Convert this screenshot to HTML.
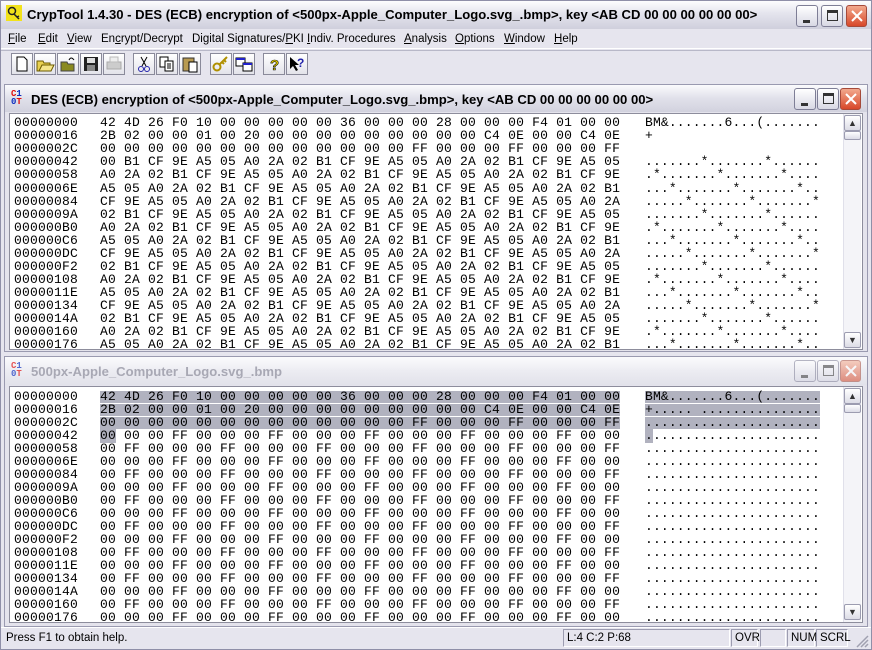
<!DOCTYPE html>
<html><head><meta charset="utf-8"><style>
*{margin:0;padding:0;box-sizing:border-box}
body{width:872px;height:650px;overflow:hidden;background:#d4d0e4;font-family:"Liberation Sans",sans-serif;font-size:11.5px;position:relative}
.abs{position:absolute}
.frame{left:0;top:0;width:872px;height:650px;background:#e6e5ee;border:1px solid #8f8fa8}
.title{left:1px;top:1px;width:870px;height:28px;background:linear-gradient(#fdfdfe,#e6e6ef 40%,#cfcfdc);}
.ttext{font-weight:bold;font-size:13.1px;color:#000;white-space:pre}
.btn{width:22px;height:22px;border:1px solid #7e7e96;border-radius:3px;background:linear-gradient(#fff,#d8d8e4)}
.cls{background:linear-gradient(#f2a98e,#d8482a);border-color:#a54a3a}
.menu{left:1px;top:30px;width:870px;height:19px;background:#e6e5ee;border-bottom:1px solid #fff}
.menu span{position:absolute;top:3px;font-size:11.5px}
.tb{left:1px;top:50px;width:870px;height:32px;background:#e6e5ee;border-top:1px solid #b8b8c8}
.tbb{width:22px;height:22px;border:1px solid #8a8a9a;background:linear-gradient(#fff,#e3e3ea);top:53px}
.child{border:1px solid #9a9ab0;background:#e4e3ec}
.ctitle{background:linear-gradient(#fbfbfd,#e0e0ea 50%,#d2d2de)}
.content{background:#fff;border:1px solid #8d8d9c;overflow:hidden}
.row{position:absolute;height:13px;font-family:"Liberation Mono",monospace;font-size:13px;line-height:12px;white-space:pre;letter-spacing:0.2px;color:#000}
.row span{position:absolute;top:0;height:12px}
.o{left:4px}.h{left:90px}.a{left:635px;letter-spacing:0.15px}
.sel{background:#b1b2bf}
.sb{width:18px;background:#f4f4f8;border-left:1px solid #e0e0ea}
.sbb{width:17px;height:16px;border:1px solid #9c9cb0;border-radius:2px;background:linear-gradient(#fff,#dcdce6);font-size:9px;text-align:center;line-height:14px;color:#333}
.status{left:1px;top:627px;width:870px;height:22px;background:#e6e5ee;border-top:1px solid #fff}
.pan{top:629px;height:18px;border:1px solid;border-color:#9c9cb0 #fff #fff #9c9cb0;font-size:11.5px;padding:2px 0 0 3px}
</style></head><body>
<div class="abs frame"></div>
<div class="abs title"></div>
<svg class="abs" style="left:6px;top:5px" width="16" height="16"><rect width="16" height="16" fill="#f2e21a"/><circle cx="6" cy="6" r="3.5" fill="none" stroke="#222" stroke-width="1.5"/><path d="M8 9l5 5M11 12l2-1" stroke="#222" stroke-width="1.5"/></svg>
<div class="abs ttext" style="left:27px;top:7px">CrypTool 1.4.30 - DES (ECB) encryption of &lt;500px-Apple_Computer_Logo.svg_.bmp&gt;, key &lt;AB CD 00 00 00 00 00 00&gt;</div>
<div class="abs btn" style="left:796px;top:5px"><div class="abs" style="left:6px;top:14px;width:7px;height:3px;background:#333"></div></div>
<div class="abs btn" style="left:821px;top:5px"><div class="abs" style="left:5px;top:4px;width:11px;height:11px;border:1px solid #333;border-top-width:3px"></div></div>
<div class="abs btn cls" style="left:846px;top:5px;width:21px"><svg class="abs" style="left:4px;top:4px" width="12" height="12"><path d="M1 1L11 11M11 1L1 11" stroke="#fff" stroke-width="2"/></svg></div>

<div class="abs menu">
<span style="left:7px"><u>F</u>ile</span><span style="left:37px"><u>E</u>dit</span><span style="left:66px"><u>V</u>iew</span><span style="left:100px">En<u>c</u>rypt/Decrypt</span><span style="left:191px">Digital Signatures/<u>P</u>KI</span><span style="left:306px"><u>I</u>ndiv. Procedures</span><span style="left:403px"><u>A</u>nalysis</span><span style="left:454px"><u>O</u>ptions</span><span style="left:503px"><u>W</u>indow</span><span style="left:553px"><u>H</u>elp</span>
</div>
<div class="abs tb"></div>
<div class="abs tbb" style="left:11px"><svg width="20" height="20"><path d="M5 3h7l3 3v11H5z" fill="#fff" stroke="#000"/></svg></div>
<div class="abs tbb" style="left:34px"><svg width="20" height="20"><path d="M2 7h6l1 2h6v8H2z" fill="#e8d050" stroke="#6b5a00"/><path d="M4 17l3-6h12l-3 6z" fill="#f4e58a" stroke="#6b5a00"/></svg></div>
<div class="abs tbb" style="left:57px"><svg width="20" height="20"><path d="M3 8h6l1 2h6v7H3z" fill="#8a8a20" stroke="#444"/><path d="M11 6q2-4 5 0" fill="none" stroke="#000"/></svg></div>
<div class="abs tbb" style="left:80px"><svg width="20" height="20"><rect x="3" y="3" width="14" height="14" fill="#222"/><rect x="6" y="4" width="8" height="5" fill="#ddd"/><rect x="6" y="11" width="8" height="6" fill="#888"/></svg></div>
<div class="abs tbb" style="left:103px"><svg width="20" height="20"><rect x="3" y="8" width="14" height="7" fill="#ccc" stroke="#aaa"/><rect x="6" y="3" width="8" height="5" fill="#eee" stroke="#bbb"/></svg></div>
<div class="abs tbb" style="left:133px"><svg width="20" height="20"><path d="M7 3l5 9M13 3l-5 9" stroke="#000"/><circle cx="7" cy="15" r="2.5" fill="none" stroke="#22a"/><circle cx="13" cy="15" r="2.5" fill="none" stroke="#22a"/></svg></div>
<div class="abs tbb" style="left:156px"><svg width="20" height="20"><rect x="3" y="3" width="8" height="10" fill="#fff" stroke="#000"/><rect x="8" y="7" width="8" height="10" fill="#fff" stroke="#000"/><path d="M10 10h4M10 12h4M10 14h4" stroke="#000"/></svg></div>
<div class="abs tbb" style="left:179px"><svg width="20" height="20"><rect x="3" y="4" width="11" height="13" fill="#b89a50" stroke="#333"/><rect x="9" y="8" width="8" height="10" fill="#fff" stroke="#000"/></svg></div>
<div class="abs tbb" style="left:210px"><svg width="20" height="20"><circle cx="6" cy="13" r="3.5" fill="none" stroke="#b09000" stroke-width="2"/><path d="M8 11l8-8M13 6l2 2M11 8l2 2" stroke="#b09000" stroke-width="2"/></svg></div>
<div class="abs tbb" style="left:233px"><svg width="20" height="20"><rect x="2" y="4" width="9" height="8" fill="#fff" stroke="#000"/><rect x="9" y="9" width="9" height="8" fill="#fff" stroke="#000"/><path d="M2 5h9M9 10h9" stroke="#22c" stroke-width="2"/></svg></div>
<div class="abs tbb" style="left:263px"><svg width="20" height="20"><text x="6" y="16" font-family="Liberation Sans" font-weight="bold" font-size="15" fill="#e8d000" stroke="#000" stroke-width="0.6">?</text></svg></div>
<div class="abs tbb" style="left:286px"><svg width="20" height="20"><path d="M3 3v12l3-3 3 5 2-1-3-5h4z" fill="#000"/><text x="10" y="13" font-family="Liberation Sans" font-weight="bold" font-size="12" fill="#22a">?</text></svg></div>

<!-- child 1 -->
<div class="abs child" style="left:4px;top:84px;width:864px;height:268px"></div>
<div class="abs ctitle" style="left:5px;top:85px;width:862px;height:27px"></div>
<div class="abs" style="left:11px;top:90px;width:16px;height:16px;font-family:'Liberation Mono',monospace;font-size:9px;line-height:8px;font-weight:bold"><span style="color:#e01010">C</span><span style="color:#1030c0">1</span><br><span style="color:#1030c0">0</span><span style="color:#e01010">T</span></div>
<div class="abs ttext" style="left:31px;top:92px">DES (ECB) encryption of &lt;500px-Apple_Computer_Logo.svg_.bmp&gt;, key &lt;AB CD 00 00 00 00 00 00&gt;</div>
<div class="abs btn" style="left:794px;top:88px"><div class="abs" style="left:6px;top:14px;width:7px;height:3px;background:#333"></div></div>
<div class="abs btn" style="left:817px;top:88px"><div class="abs" style="left:5px;top:4px;width:11px;height:11px;border:1px solid #333;border-top-width:3px"></div></div>
<div class="abs btn cls" style="left:840px;top:88px;width:21px"><svg class="abs" style="left:4px;top:4px" width="12" height="12"><path d="M1 1L11 11M11 1L1 11" stroke="#fff" stroke-width="2"/></svg></div>
<div class="abs content" style="left:9px;top:113px;width:854px;height:237px">
<div class="row" style="top:3px"><span class="o">00000000</span><span class="h">42 4D 26 F0 10 00 00 00 00 00 36 00 00 00 28 00 00 00 F4 01 00 00</span><span class="a">BM&amp;.......6...(.......</span></div>
<div class="row" style="top:16px"><span class="o">00000016</span><span class="h">2B 02 00 00 01 00 20 00 00 00 00 00 00 00 00 00 C4 0E 00 00 C4 0E</span><span class="a">+</span></div>
<div class="row" style="top:29px"><span class="o">0000002C</span><span class="h">00 00 00 00 00 00 00 00 00 00 00 00 00 FF 00 00 00 FF 00 00 00 FF</span><span class="a"></span></div>
<div class="row" style="top:42px"><span class="o">00000042</span><span class="h">00 B1 CF 9E A5 05 A0 2A 02 B1 CF 9E A5 05 A0 2A 02 B1 CF 9E A5 05</span><span class="a">.......*.......*......</span></div>
<div class="row" style="top:55px"><span class="o">00000058</span><span class="h">A0 2A 02 B1 CF 9E A5 05 A0 2A 02 B1 CF 9E A5 05 A0 2A 02 B1 CF 9E</span><span class="a">.*.......*.......*....</span></div>
<div class="row" style="top:69px"><span class="o">0000006E</span><span class="h">A5 05 A0 2A 02 B1 CF 9E A5 05 A0 2A 02 B1 CF 9E A5 05 A0 2A 02 B1</span><span class="a">...*.......*.......*..</span></div>
<div class="row" style="top:82px"><span class="o">00000084</span><span class="h">CF 9E A5 05 A0 2A 02 B1 CF 9E A5 05 A0 2A 02 B1 CF 9E A5 05 A0 2A</span><span class="a">.....*.......*.......*</span></div>
<div class="row" style="top:95px"><span class="o">0000009A</span><span class="h">02 B1 CF 9E A5 05 A0 2A 02 B1 CF 9E A5 05 A0 2A 02 B1 CF 9E A5 05</span><span class="a">.......*.......*......</span></div>
<div class="row" style="top:108px"><span class="o">000000B0</span><span class="h">A0 2A 02 B1 CF 9E A5 05 A0 2A 02 B1 CF 9E A5 05 A0 2A 02 B1 CF 9E</span><span class="a">.*.......*.......*....</span></div>
<div class="row" style="top:121px"><span class="o">000000C6</span><span class="h">A5 05 A0 2A 02 B1 CF 9E A5 05 A0 2A 02 B1 CF 9E A5 05 A0 2A 02 B1</span><span class="a">...*.......*.......*..</span></div>
<div class="row" style="top:134px"><span class="o">000000DC</span><span class="h">CF 9E A5 05 A0 2A 02 B1 CF 9E A5 05 A0 2A 02 B1 CF 9E A5 05 A0 2A</span><span class="a">.....*.......*.......*</span></div>
<div class="row" style="top:147px"><span class="o">000000F2</span><span class="h">02 B1 CF 9E A5 05 A0 2A 02 B1 CF 9E A5 05 A0 2A 02 B1 CF 9E A5 05</span><span class="a">.......*.......*......</span></div>
<div class="row" style="top:160px"><span class="o">00000108</span><span class="h">A0 2A 02 B1 CF 9E A5 05 A0 2A 02 B1 CF 9E A5 05 A0 2A 02 B1 CF 9E</span><span class="a">.*.......*.......*....</span></div>
<div class="row" style="top:173px"><span class="o">0000011E</span><span class="h">A5 05 A0 2A 02 B1 CF 9E A5 05 A0 2A 02 B1 CF 9E A5 05 A0 2A 02 B1</span><span class="a">...*.......*.......*..</span></div>
<div class="row" style="top:186px"><span class="o">00000134</span><span class="h">CF 9E A5 05 A0 2A 02 B1 CF 9E A5 05 A0 2A 02 B1 CF 9E A5 05 A0 2A</span><span class="a">.....*.......*.......*</span></div>
<div class="row" style="top:199px"><span class="o">0000014A</span><span class="h">02 B1 CF 9E A5 05 A0 2A 02 B1 CF 9E A5 05 A0 2A 02 B1 CF 9E A5 05</span><span class="a">.......*.......*......</span></div>
<div class="row" style="top:212px"><span class="o">00000160</span><span class="h">A0 2A 02 B1 CF 9E A5 05 A0 2A 02 B1 CF 9E A5 05 A0 2A 02 B1 CF 9E</span><span class="a">.*.......*.......*....</span></div>
<div class="row" style="top:225px"><span class="o">00000176</span><span class="h">A5 05 A0 2A 02 B1 CF 9E A5 05 A0 2A 02 B1 CF 9E A5 05 A0 2A 02 B1</span><span class="a">...*.......*.......*..</span></div>
<div class="abs sb" style="left:833px;top:0;height:235px"></div>
<div class="abs sbb" style="left:834px;top:1px">&#9650;</div>
<div class="abs sbb" style="left:834px;top:17px;height:9px"></div>
<div class="abs sbb" style="left:834px;top:218px">&#9660;</div>
</div>

<!-- child 2 -->
<div class="abs child" style="left:4px;top:356px;width:864px;height:271px"></div>
<div class="abs ctitle" style="left:5px;top:357px;width:862px;height:28px;background:linear-gradient(#fbfbfd,#ececf2 50%,#e2e2ea)"></div>
<div class="abs" style="left:11px;top:362px;width:16px;height:16px;font-family:'Liberation Mono',monospace;font-size:9px;line-height:8px;font-weight:bold;opacity:.7"><span style="color:#e01010">C</span><span style="color:#1030c0">1</span><br><span style="color:#1030c0">0</span><span style="color:#e01010">T</span></div>
<div class="abs ttext" style="left:31px;top:364px;color:#a8a8b4">500px-Apple_Computer_Logo.svg_.bmp</div>
<div class="abs btn" style="left:794px;top:360px;opacity:.55"><div class="abs" style="left:6px;top:14px;width:7px;height:3px;background:#333"></div></div>
<div class="abs btn" style="left:817px;top:360px;opacity:.55"><div class="abs" style="left:5px;top:4px;width:11px;height:11px;border:1px solid #333;border-top-width:3px"></div></div>
<div class="abs btn cls" style="left:840px;top:360px;width:21px;opacity:.55"><svg class="abs" style="left:4px;top:4px" width="12" height="12"><path d="M1 1L11 11M11 1L1 11" stroke="#fff" stroke-width="2"/></svg></div>
<div class="abs content" style="left:9px;top:386px;width:854px;height:237px">
<div class="row" style="top:4px"><span class="o">00000000</span><span class="h sel">42 4D 26 F0 10 00 00 00 00 00 36 00 00 00 28 00 00 00 F4 01 00 00</span><span class="a sel">BM&amp;.......6...(.......</span></div>
<div class="row" style="top:17px"><span class="o">00000016</span><span class="h sel">2B 02 00 00 01 00 20 00 00 00 00 00 00 00 00 00 C4 0E 00 00 C4 0E</span><span class="a sel">+..... ...............</span></div>
<div class="row" style="top:30px"><span class="o">0000002C</span><span class="h sel">00 00 00 00 00 00 00 00 00 00 00 00 00 FF 00 00 00 FF 00 00 00 FF</span><span class="a sel">......................</span></div>
<div class="row" style="top:43px"><span class="o">00000042</span><span class="h"><span class="sel" style="position:static">00</span> 00 00 FF 00 00 00 FF 00 00 00 FF 00 00 00 FF 00 00 00 FF 00 00</span><span class="a"><span class="sel" style="position:static">.</span>.....................</span></div>
<div class="row" style="top:56px"><span class="o">00000058</span><span class="h">00 FF 00 00 00 FF 00 00 00 FF 00 00 00 FF 00 00 00 FF 00 00 00 FF</span><span class="a">......................</span></div>
<div class="row" style="top:69px"><span class="o">0000006E</span><span class="h">00 00 00 FF 00 00 00 FF 00 00 00 FF 00 00 00 FF 00 00 00 FF 00 00</span><span class="a">......................</span></div>
<div class="row" style="top:82px"><span class="o">00000084</span><span class="h">00 FF 00 00 00 FF 00 00 00 FF 00 00 00 FF 00 00 00 FF 00 00 00 FF</span><span class="a">......................</span></div>
<div class="row" style="top:95px"><span class="o">0000009A</span><span class="h">00 00 00 FF 00 00 00 FF 00 00 00 FF 00 00 00 FF 00 00 00 FF 00 00</span><span class="a">......................</span></div>
<div class="row" style="top:108px"><span class="o">000000B0</span><span class="h">00 FF 00 00 00 FF 00 00 00 FF 00 00 00 FF 00 00 00 FF 00 00 00 FF</span><span class="a">......................</span></div>
<div class="row" style="top:121px"><span class="o">000000C6</span><span class="h">00 00 00 FF 00 00 00 FF 00 00 00 FF 00 00 00 FF 00 00 00 FF 00 00</span><span class="a">......................</span></div>
<div class="row" style="top:134px"><span class="o">000000DC</span><span class="h">00 FF 00 00 00 FF 00 00 00 FF 00 00 00 FF 00 00 00 FF 00 00 00 FF</span><span class="a">......................</span></div>
<div class="row" style="top:147px"><span class="o">000000F2</span><span class="h">00 00 00 FF 00 00 00 FF 00 00 00 FF 00 00 00 FF 00 00 00 FF 00 00</span><span class="a">......................</span></div>
<div class="row" style="top:160px"><span class="o">00000108</span><span class="h">00 FF 00 00 00 FF 00 00 00 FF 00 00 00 FF 00 00 00 FF 00 00 00 FF</span><span class="a">......................</span></div>
<div class="row" style="top:173px"><span class="o">0000011E</span><span class="h">00 00 00 FF 00 00 00 FF 00 00 00 FF 00 00 00 FF 00 00 00 FF 00 00</span><span class="a">......................</span></div>
<div class="row" style="top:186px"><span class="o">00000134</span><span class="h">00 FF 00 00 00 FF 00 00 00 FF 00 00 00 FF 00 00 00 FF 00 00 00 FF</span><span class="a">......................</span></div>
<div class="row" style="top:199px"><span class="o">0000014A</span><span class="h">00 00 00 FF 00 00 00 FF 00 00 00 FF 00 00 00 FF 00 00 00 FF 00 00</span><span class="a">......................</span></div>
<div class="row" style="top:212px"><span class="o">00000160</span><span class="h">00 FF 00 00 00 FF 00 00 00 FF 00 00 00 FF 00 00 00 FF 00 00 00 FF</span><span class="a">......................</span></div>
<div class="row" style="top:225px"><span class="o">00000176</span><span class="h">00 00 00 FF 00 00 00 FF 00 00 00 FF 00 00 00 FF 00 00 00 FF 00 00</span><span class="a">......................</span></div>
<div class="abs sb" style="left:833px;top:0;height:235px"></div>
<div class="abs sbb" style="left:834px;top:1px">&#9650;</div>
<div class="abs sbb" style="left:834px;top:17px;height:9px"></div>
<div class="abs sbb" style="left:834px;top:217px">&#9660;</div>
</div>

<div class="abs status"></div>
<div class="abs" style="left:6px;top:632px;font-size:11.5px">Press F1 to obtain help.</div>
<div class="abs pan" style="left:563px;width:167px">L:4 C:2 P:68</div>
<div class="abs pan" style="left:731px;width:27px">OVR</div>
<div class="abs pan" style="left:760px;width:26px"></div>
<div class="abs pan" style="left:787px;width:28px">NUM</div>
<div class="abs pan" style="left:816px;width:32px">SCRL</div>
<svg class="abs" style="left:855px;top:634px" width="14" height="14"><path d="M13 2L2 13M13 6L6 13M13 10L10 13" stroke="#a0a0b0" stroke-width="1.5"/></svg>
</body></html>
